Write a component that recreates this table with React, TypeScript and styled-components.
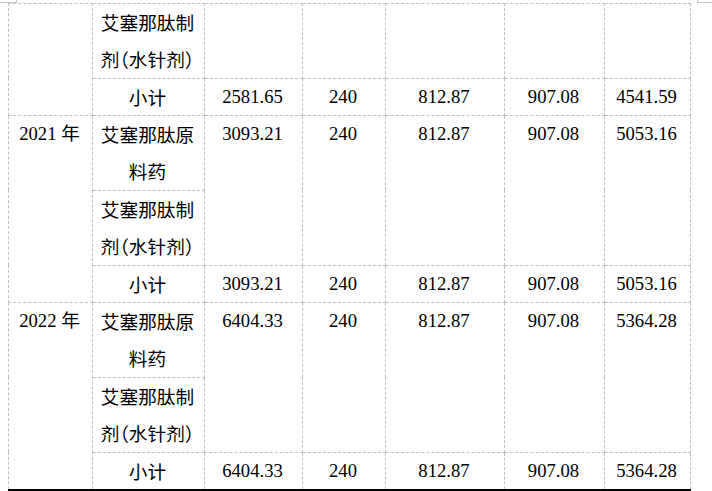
import React from "react";
import styled, { createGlobalStyle } from "styled-components";

const Global = createGlobalStyle`
  html, body { margin: 0; padding: 0; background: #fff; }
  body { width: 712px; height: 491px; overflow: hidden; position: relative; }
`;

const Page = styled.div`
  padding: 3px 0 0 8px;
`;

const CornerMark = styled.span<{ $side: "left" | "right" }>`
  position: absolute;
  top: 0;
  ${(p) => (p.$side === "left" ? "left: 0;" : "right: 0;")}
  width: ${(p) => (p.$side === "left" ? "17px" : "15px")};
  height: 3px;
  border-bottom: 1px solid #c4c4c4;
  ${(p) =>
    p.$side === "left"
      ? "border-right: 1px solid #c4c4c4;"
      : "border-left: 1px solid #c4c4c4;"}
  box-sizing: border-box;
`;

const Table = styled.table`
  border-collapse: collapse;
  table-layout: fixed;
  width: 682px;
  font-size: 18.67px;
  color: #000;
`;

const Cell = styled.td<{ $last?: boolean; $cjk?: boolean }>`
  border: 1px dashed #c0c0c0;
  ${(p) => (p.$last ? "border-bottom: 3px solid #000;" : "")}
  padding: 0 8px 0 6px;
  height: 0;
  line-height: 36.8px;
  font-family: ${(p) =>
    p.$cjk
      ? '"Noto Sans CJK SC", sans-serif'
      : '"Liberation Serif", "Noto Sans CJK SC", serif'};
  text-align: center;
  vertical-align: top;
  white-space: normal;
  word-break: break-all;
  overflow: hidden;
`;

const Paren = styled.span`
  font-feature-settings: "halt";
`;

const YearSuffix = styled.span`
  font-family: "Noto Sans CJK SC", sans-serif;
  line-height: 1;
`;

const widths = [84, 112, 98, 83, 119, 100, 86];

const Preparation = () => (
  <>
    艾塞那肽制剂<Paren>（</Paren>水针剂<Paren>）</Paren>
  </>
);

type Group = { year: string; values: string[]; last?: boolean };

const groups: Group[] = [
  { year: "2021", values: ["3093.21", "240", "812.87", "907.08", "5053.16"] },
  { year: "2022", values: ["6404.33", "240", "812.87", "907.08", "5364.28"], last: true },
];

export default function App() {
  return (
    <>
      <Global />
      <CornerMark $side="left" />
      <CornerMark $side="right" />
      <Page>
        <Table>
          <colgroup>
            {widths.map((w, i) => (
              <col key={i} style={{ width: w }} />
            ))}
          </colgroup>
          <tbody>
            <tr>
              <Cell rowSpan={2} />
              <Cell $cjk>
                <Preparation />
              </Cell>
              <Cell />
              <Cell />
              <Cell />
              <Cell />
              <Cell />
            </tr>
            <tr>
              <Cell $cjk>小计</Cell>
              {["2581.65", "240", "812.87", "907.08", "4541.59"].map((v, i) => (
                <Cell key={i}>{v}</Cell>
              ))}
            </tr>
            {groups.map((g) => (
              <React.Fragment key={g.year}>
                <tr>
                  <Cell rowSpan={3} $last={g.last}>
                    {g.year} <YearSuffix>年</YearSuffix>
                  </Cell>
                  <Cell $cjk>艾塞那肽原料药</Cell>
                  {g.values.map((v, i) => (
                    <Cell key={i} rowSpan={2}>
                      {v}
                    </Cell>
                  ))}
                </tr>
                <tr>
                  <Cell $cjk>
                    <Preparation />
                  </Cell>
                </tr>
                <tr>
                  <Cell $cjk $last={g.last}>
                    小计
                  </Cell>
                  {g.values.map((v, i) => (
                    <Cell key={i} $last={g.last}>
                      {v}
                    </Cell>
                  ))}
                </tr>
              </React.Fragment>
            ))}
          </tbody>
        </Table>
      </Page>
    </>
  );
}
